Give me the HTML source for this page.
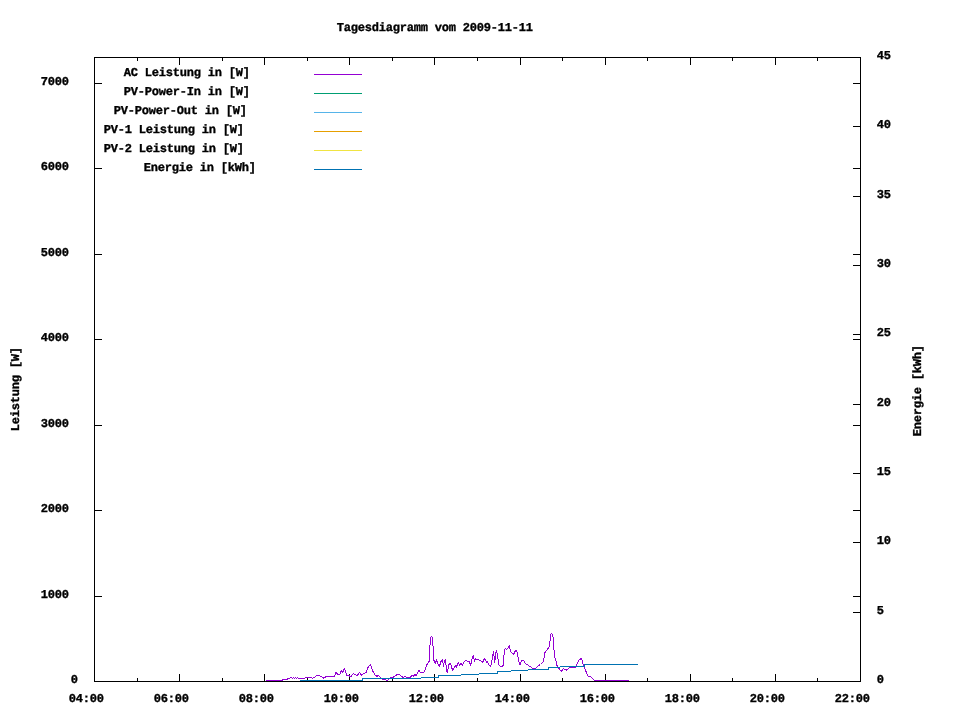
<!DOCTYPE html>
<html lang="de">
<head>
<meta charset="utf-8">
<title>Tagesdiagramm vom 2009-11-11</title>
<style>
html,body{margin:0;padding:0;background:#fff;}
body{width:960px;height:720px;overflow:hidden;}
svg{display:block;will-change:transform;}
text{font-family:"Liberation Mono", "DejaVu Sans Mono", monospace;font-weight:bold;font-size:12.0px;fill:#000;stroke:#000;stroke-width:0.35px;letter-spacing:-0.200px;white-space:pre;text-rendering:geometricPrecision;}
rect{shape-rendering:crispEdges;}
</style>
</head>
<body>
<svg width="960" height="720" viewBox="0 0 960 720">
<rect x="0" y="0" width="960" height="720" fill="#fff"/>
<rect x="94" y="57" width="767" height="1" fill="#000"/>
<rect x="94" y="681" width="767" height="1" fill="#000"/>
<rect x="94" y="57" width="1" height="625" fill="#000"/>
<rect x="860" y="57" width="1" height="625" fill="#000"/>
<text x="68.8" y="702">04:00</text>
<rect x="137" y="678" width="1" height="4" fill="#000"/>
<rect x="137" y="57" width="1" height="4" fill="#000"/>
<rect x="179" y="674" width="1" height="8" fill="#000"/>
<rect x="179" y="57" width="1" height="8" fill="#000"/>
<text x="153.8" y="702">06:00</text>
<rect x="222" y="678" width="1" height="4" fill="#000"/>
<rect x="222" y="57" width="1" height="4" fill="#000"/>
<rect x="264" y="674" width="1" height="8" fill="#000"/>
<rect x="264" y="57" width="1" height="8" fill="#000"/>
<text x="238.8" y="702">08:00</text>
<rect x="307" y="678" width="1" height="4" fill="#000"/>
<rect x="307" y="57" width="1" height="4" fill="#000"/>
<rect x="349" y="674" width="1" height="8" fill="#000"/>
<rect x="349" y="57" width="1" height="8" fill="#000"/>
<text x="323.8" y="702">10:00</text>
<rect x="392" y="678" width="1" height="4" fill="#000"/>
<rect x="392" y="57" width="1" height="4" fill="#000"/>
<rect x="434" y="674" width="1" height="8" fill="#000"/>
<rect x="434" y="57" width="1" height="8" fill="#000"/>
<text x="408.8" y="702">12:00</text>
<rect x="477" y="678" width="1" height="4" fill="#000"/>
<rect x="477" y="57" width="1" height="4" fill="#000"/>
<rect x="520" y="674" width="1" height="8" fill="#000"/>
<rect x="520" y="57" width="1" height="8" fill="#000"/>
<text x="494.8" y="702">14:00</text>
<rect x="562" y="678" width="1" height="4" fill="#000"/>
<rect x="562" y="57" width="1" height="4" fill="#000"/>
<rect x="605" y="674" width="1" height="8" fill="#000"/>
<rect x="605" y="57" width="1" height="8" fill="#000"/>
<text x="579.8" y="702">16:00</text>
<rect x="647" y="678" width="1" height="4" fill="#000"/>
<rect x="647" y="57" width="1" height="4" fill="#000"/>
<rect x="690" y="674" width="1" height="8" fill="#000"/>
<rect x="690" y="57" width="1" height="8" fill="#000"/>
<text x="664.8" y="702">18:00</text>
<rect x="732" y="678" width="1" height="4" fill="#000"/>
<rect x="732" y="57" width="1" height="4" fill="#000"/>
<rect x="775" y="674" width="1" height="8" fill="#000"/>
<rect x="775" y="57" width="1" height="8" fill="#000"/>
<text x="749.8" y="702">20:00</text>
<rect x="817" y="678" width="1" height="4" fill="#000"/>
<rect x="817" y="57" width="1" height="4" fill="#000"/>
<text x="834.8" y="702">22:00</text>
<text x="70.8" y="683">0</text>
<rect x="94" y="596" width="8" height="1" fill="#000"/>
<rect x="853" y="596" width="8" height="1" fill="#000"/>
<text x="40.8" y="598">1000</text>
<rect x="94" y="510" width="8" height="1" fill="#000"/>
<rect x="853" y="510" width="8" height="1" fill="#000"/>
<text x="40.8" y="512">2000</text>
<rect x="94" y="425" width="8" height="1" fill="#000"/>
<rect x="853" y="425" width="8" height="1" fill="#000"/>
<text x="40.8" y="427">3000</text>
<rect x="94" y="339" width="8" height="1" fill="#000"/>
<rect x="853" y="339" width="8" height="1" fill="#000"/>
<text x="40.8" y="341">4000</text>
<rect x="94" y="254" width="8" height="1" fill="#000"/>
<rect x="853" y="254" width="8" height="1" fill="#000"/>
<text x="40.8" y="256">5000</text>
<rect x="94" y="168" width="8" height="1" fill="#000"/>
<rect x="853" y="168" width="8" height="1" fill="#000"/>
<text x="40.8" y="170">6000</text>
<rect x="94" y="83" width="8" height="1" fill="#000"/>
<rect x="853" y="83" width="8" height="1" fill="#000"/>
<text x="40.8" y="85">7000</text>
<text x="876.8" y="683">0</text>
<rect x="853" y="612" width="8" height="1" fill="#000"/>
<text x="876.8" y="614">5</text>
<rect x="853" y="542" width="8" height="1" fill="#000"/>
<text x="876.8" y="544">10</text>
<rect x="853" y="473" width="8" height="1" fill="#000"/>
<text x="876.8" y="475">15</text>
<rect x="853" y="404" width="8" height="1" fill="#000"/>
<text x="876.8" y="406">20</text>
<rect x="853" y="334" width="8" height="1" fill="#000"/>
<text x="876.8" y="336">25</text>
<rect x="853" y="265" width="8" height="1" fill="#000"/>
<text x="876.8" y="267">30</text>
<rect x="853" y="196" width="8" height="1" fill="#000"/>
<text x="876.8" y="198">35</text>
<rect x="853" y="126" width="8" height="1" fill="#000"/>
<text x="876.8" y="128">40</text>
<text x="876.8" y="59">45</text>
<text x="336.8" y="31">Tagesdiagramm vom 2009-11-11</text>
<text transform="translate(19,431.2) rotate(-90)" x="0" y="0">Leistung [W]</text>
<text transform="translate(921,436.2) rotate(-90)" x="0" y="0">Energie [kWh]</text>
<text x="123.8" y="76">AC Leistung in [W]</text>
<rect x="314" y="74" width="48" height="1" fill="#9400d3"/>
<text x="123.8" y="95">PV-Power-In in [W]</text>
<rect x="314" y="93" width="48" height="1" fill="#009e73"/>
<text x="113.8" y="114">PV-Power-Out in [W]</text>
<rect x="314" y="112" width="48" height="1" fill="#56b4e9"/>
<text x="103.8" y="133">PV-1 Leistung in [W]</text>
<rect x="314" y="131" width="48" height="1" fill="#e69f00"/>
<text x="103.8" y="152">PV-2 Leistung in [W]</text>
<rect x="314" y="150" width="48" height="1" fill="#f0e442"/>
<text x="143.8" y="171">Energie in [kWh]</text>
<rect x="314" y="169" width="48" height="1" fill="#0072b2"/>
<polyline points="266.2,680.5 282.5,680.5 282.9,679.6 287.2,679.6 287.7,678.5 290.6,677.9 291.5,677.3 292.5,678.5 293.5,677.3 294.5,678.5 295.5,677.3 296.5,678.5 297.5,677.9 300.0,678.2 307.5,677.9 311.2,677.5 312.5,678.1 315.0,677.2 316.9,675.4 319.4,675.6 321.2,676.6 323.7,678.1 326.2,676.6 334.4,676.4 335.9,672.5 337.5,674.0 340.0,674.0 341.5,669.7 342.5,673.1 344.4,668.4 345.6,671.2 346.5,675.0 349.4,676.0 351.2,676.2 353.5,673.5 355.6,675.0 357.5,675.0 359.6,672.5 361.5,675.2 363.7,673.5 366.2,672.2 368.1,667.2 370.4,664.4 371.2,666.2 372.5,670.6 375.0,675.0 376.9,676.2 378.7,675.6 380.6,677.9 382.5,679.1 385.0,679.4 386.9,680.6 388.7,679.4 390.6,677.2 392.5,677.5 395.0,676.2 397.5,674.0 399.4,674.7 401.2,676.0 403.1,677.5 405.0,676.5 406.9,677.5 408.7,677.9 410.6,676.9 412.5,675.2 413.7,676.2 415.0,674.0 416.2,676.2 417.5,673.1 418.7,670.2 420.0,671.9 421.9,673.1 423.7,672.5 425.6,668.7 426.9,664.4 428.5,663.5 429.5,659.5 429.5,645.5 430.5,644.5 430.5,637.5 431.5,636.5 432.5,637.5 432.5,645.5 433.5,646.5 433.5,659.5 434.5,661.5 435.5,663.5 436.5,659.5 437.5,663.5 438.5,664.5 439.5,666.5 440.5,662.5 441.5,660.5 442.5,659.5 443.5,666.5 444.5,660.5 445.5,659.5 446.5,670.5 447.5,672.5 448.5,665.5 449.5,663.5 450.5,663.5 451.5,666.5 452.5,670.5 453.5,668.5 454.5,667.5 455.5,665.5 456.5,667.5 457.5,663.5 458.5,662.5 459.5,665.5 460.5,663.5 461.5,663.5 462.5,665.5 463.5,662.5 464.5,661.5 465.5,660.5 466.5,660.5 467.5,661.5 468.5,661.5 469.5,661.5 470.5,665.5 471.5,661.5 472.5,656.5 473.5,655.5 474.5,661.5 475.5,658.5 476.5,659.5 477.5,659.5 478.5,659.5 479.5,660.5 480.5,660.5 481.5,661.5 482.5,662.5 483.5,660.5 484.5,658.5 485.5,659.5 486.5,662.5 487.5,661.5 488.5,664.5 489.5,665.5 490.5,666.5 491.5,663.5 492.5,656.5 493.5,651.5 494.7,662.5 496.2,650.6 497.5,654.4 498.7,664.4 501.0,667.2 503.1,665.6 504.5,649.5 505.5,648.5 506.5,649.5 507.5,648.5 508.5,647.5 509.5,645.5 510.5,651.5 513.5,654.5 515.5,650.5 516.5,650.5 517.5,653.5 518.7,661.2 520.0,665.0 521.2,661.2 523.1,660.0 525.6,663.7 528.7,665.6 532.5,668.1 535.6,668.5 538.7,665.5 540.5,664.5 543.5,661.5 543.5,658.5 544.5,657.5 544.5,653.5 545.5,651.5 547.5,649.5 548.5,647.5 549.5,646.5 549.5,641.5 550.5,640.5 550.5,634.5 551.5,633.5 552.5,634.5 552.5,636.5 553.5,637.5 553.5,649.5 554.5,650.5 554.5,657.5 555.5,658.5 555.5,660.5 556.5,661.5 556.5,664.5 558.1,667.5 561.2,671.2 563.5,668.7 566.2,670.2 570.0,667.2 576.2,667.2 577.5,662.5 579.5,659.5 581.5,658.5 583.7,666.2 588.1,676.2 590.6,676.9 594.4,680.4 600.0,680.6 628.7,680.5" fill="none" stroke="#9400d3" stroke-width="1" stroke-linejoin="bevel" shape-rendering="crispEdges"/>
<rect x="300" y="680" width="62" height="1" fill="#0072b2"/>
<rect x="362" y="678" width="59" height="1" fill="#0072b2"/>
<rect x="362" y="678" width="1" height="3" fill="#0072b2"/>
<rect x="421" y="677" width="17" height="1" fill="#0072b2"/>
<rect x="438" y="675" width="23" height="1" fill="#0072b2"/>
<rect x="438" y="675" width="1" height="3" fill="#0072b2"/>
<rect x="461" y="674" width="18" height="1" fill="#0072b2"/>
<rect x="479" y="673" width="18" height="1" fill="#0072b2"/>
<rect x="497" y="671" width="14" height="1" fill="#0072b2"/>
<rect x="497" y="671" width="1" height="3" fill="#0072b2"/>
<rect x="511" y="670" width="17" height="1" fill="#0072b2"/>
<rect x="528" y="669" width="20" height="1" fill="#0072b2"/>
<rect x="548" y="667" width="12" height="1" fill="#0072b2"/>
<rect x="548" y="667" width="1" height="3" fill="#0072b2"/>
<rect x="560" y="666" width="24" height="1" fill="#0072b2"/>
<rect x="584" y="664" width="54" height="1" fill="#0072b2"/>
<rect x="584" y="664" width="1" height="3" fill="#0072b2"/>
</svg>
</body>
</html>
